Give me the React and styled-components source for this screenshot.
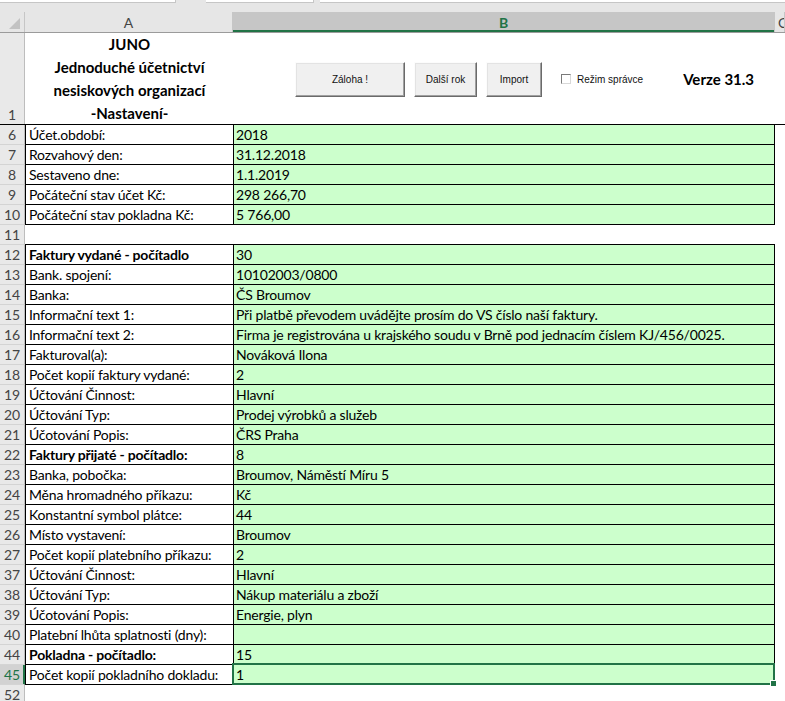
import styled, { createGlobalStyle } from "styled-components";

const GlobalStyle = createGlobalStyle`
  html, body {
    margin: 0;
    padding: 0;
    background: #fff;
  }
  body {
    width: 785px;
    height: 701px;
    overflow: hidden;
    font-family: Lato, "Liberation Sans", sans-serif;
    color: #000;
  }
`;

const COLS = "25px 209px 541px 1fr";
const GREEN = "#217346";
const MINT = "#ccffcc";

const rows = [
  { n: 6, label: "Účet.období:", value: "2018" },
  { n: 7, label: "Rozvahový den:", value: "31.12.2018" },
  { n: 8, label: "Sestaveno dne:", value: "1.1.2019" },
  { n: 9, label: "Počáteční stav účet Kč:", value: "298 266,70" },
  { n: 10, label: "Počáteční stav pokladna Kč:", value: "5 766,00" },
  { n: 11, empty: true },
  { n: 12, label: "Faktury vydané - počítadlo", value: "30", bold: true },
  { n: 13, label: "Bank. spojení:", value: "10102003/0800" },
  { n: 14, label: "Banka:", value: "ČS Broumov" },
  { n: 15, label: "Informační text 1:", value: "Při platbě převodem uvádějte prosím do VS číslo naší faktury." },
  { n: 16, label: "Informační text 2:", value: "Firma je registrována u krajského soudu v Brně pod jednacím číslem KJ/456/0025." },
  { n: 17, label: "Fakturoval(a):", value: "Nováková Ilona" },
  { n: 18, label: "Počet kopií faktury vydané:", value: "2" },
  { n: 19, label: "Účtování Činnost:", value: "Hlavní" },
  { n: 20, label: "Účtování Typ:", value: "Prodej výrobků a služeb" },
  { n: 21, label: "Účotování Popis:", value: "ČRS Praha" },
  { n: 22, label: "Faktury přijaté - počítadlo:", value: "8", bold: true },
  { n: 23, label: "Banka, pobočka:", value: "Broumov, Náměstí Míru 5" },
  { n: 24, label: "Měna hromadného příkazu:", value: "Kč" },
  { n: 25, label: "Konstantní symbol plátce:", value: "44" },
  { n: 26, label: "Místo vystavení:", value: "Broumov" },
  { n: 27, label: "Počet kopií platebního příkazu:", value: "2" },
  { n: 37, label: "Účtování Činnost:", value: "Hlavní" },
  { n: 38, label: "Účtování Typ:", value: "Nákup materiálu a zboží" },
  { n: 39, label: "Účotování Popis:", value: "Energie, plyn" },
  { n: 40, label: "Platební lhůta splatnosti (dny):", value: "" },
  { n: 44, label: "Pokladna - počítadlo:", value: "15", bold: true },
  { n: 45, label: "Počet kopií pokladního dokladu:", value: "1", selected: true },
];

function App() {
  return (
    <>
      <GlobalStyle />
      <Window>
        <TopStrip>
          <StripBox $w={175} />
          <StripGap $w={30} />
          <StripBox $w={107} />
          <StripGap $w={6} />
          <StripBox $w={467} />
        </TopStrip>

        <HeaderRow>
          <Corner>
            <CornerTriangle />
          </Corner>
          <ColHead>A</ColHead>
          <ColHead $active>B</ColHead>
          <ColHead $clip>C</ColHead>
        </HeaderRow>

        <TitleRow>
          <RowHead $bottom>1</RowHead>
          <TitleCell>
            <div>JUNO</div>
            <div>Jednoduché účetnictví</div>
            <div>nesiskových organizací</div>
            <div>-Nastavení-</div>
          </TitleCell>
          <ControlsCell>
            <Button $w={110}>Záloha !</Button>
            <Button $w={63}>Další rok</Button>
            <Button $w={56}>Import</Button>
            <CheckLabel>
              <CheckBox />
              Režim správce
            </CheckLabel>
            <Version>Verze 31.3</Version>
          </ControlsCell>
          <Blank />
        </TitleRow>

        <Table>
          {rows.map((r) => (
            <Row key={r.n}>
              <RowHead $active={r.selected}>{r.n}</RowHead>
              {r.empty ? (
                <>
                  <EmptyCell />
                  <EmptyCell />
                </>
              ) : (
                <>
                  <LabelCell $bold={r.bold}>{r.label}</LabelCell>
                  <ValueCell>
                    {r.value}
                    {r.selected && (
                      <Selection>
                        <FillHandle />
                      </Selection>
                    )}
                  </ValueCell>
                </>
              )}
              <Blank />
            </Row>
          ))}
          <Row>
            <RowHead>52</RowHead>
            <Blank />
            <Blank />
            <Blank />
          </Row>
        </Table>
      </Window>
    </>
  );
}

export default App;

const Window = styled.div`
  width: 785px;
  height: 701px;
  overflow: hidden;
  display: flex;
  flex-direction: column;
  background: #fff;
`;

const TopStrip = styled.div`
  height: 12px;
  flex: none;
  display: flex;
  align-items: flex-start;
  background: #e6e6e6;
`;

const StripBox = styled.div`
  width: ${(p) => p.$w}px;
  height: 2px;
  background: #fff;
  border-bottom: 1px solid #c6c6c6;
  border-right: 1px solid #c6c6c6;
  flex: none;
`;

const StripGap = styled.div`
  width: ${(p) => p.$w}px;
  flex: none;
`;

const HeaderRow = styled.div`
  display: grid;
  grid-template-columns: 25px 208px 542px 1fr;
  height: 21px;
  flex: none;
  background: #e6e6e6;
  border-bottom: 1px solid #9b9b9b;
  box-sizing: border-box;
`;

const Corner = styled.div`
  position: relative;
  border-right: 1px solid #c6c6c6;
`;

const CornerTriangle = styled.div`
  position: absolute;
  right: 4px;
  bottom: 3px;
  width: 0;
  height: 0;
  border-left: 11px solid transparent;
  border-bottom: 11px solid #c2c2c2;
`;

const ColHead = styled.div`
  display: flex;
  align-items: center;
  justify-content: ${(p) => (p.$clip ? "flex-start" : "center")};
  padding-left: ${(p) => (p.$clip ? "3px" : "0")};
  overflow: hidden;
  font-size: 14px;
  color: ${(p) => (p.$active ? GREEN : "#444")};
  font-weight: ${(p) => (p.$active ? 700 : 400)};
  background: ${(p) => (p.$active ? "#c6c6c6" : "transparent")};
  border-right: 1px solid #c6c6c6;
  box-shadow: ${(p) => (p.$active ? `inset 0 -2px 0 ${GREEN}` : "none")};
`;

const TitleRow = styled.div`
  display: grid;
  grid-template-columns: ${COLS};
  height: 91px;
  flex: none;
`;

const RowHead = styled.div`
  display: flex;
  align-items: ${(p) => (p.$bottom ? "flex-end" : "center")};
  justify-content: center;
  padding-bottom: ${(p) => (p.$bottom ? "1px" : "0")};
  box-sizing: border-box;
  font-size: 14px;
  color: ${(p) => (p.$active ? GREEN : "#444")};
  background: ${(p) => (p.$active ? "#d2d2d2" : "#e9e9e9")};
  border-bottom: 1px solid #d4d4d4;
  border-right: 1px solid ${(p) => (p.$active ? GREEN : "#bdbdbd")};
  ${(p) => p.$active && `box-shadow: inset -1px 0 0 ${GREEN};`}
`;

const TitleCell = styled.div`
  display: flex;
  flex-direction: column;
  justify-content: flex-end;
  align-items: center;
  font-weight: 700;
  font-size: 15px;
  line-height: 23px;
`;

const ControlsCell = styled.div`
  display: flex;
  align-items: center;
  padding-left: 61px;
  gap: 9px;
`;

const Button = styled.div`
  width: ${(p) => p.$w}px;
  height: 35px;
  box-sizing: border-box;
  display: flex;
  align-items: center;
  justify-content: center;
  font-family: "Liberation Sans", sans-serif;
  font-size: 10px;
  color: #111;
  background: #f0f0f0;
  border: 1px solid;
  border-color: #fcfcfc #6a6a6a #6a6a6a #fcfcfc;
  box-shadow: inset -1px -1px 0 #a0a0a0, inset 1px 1px 0 #e3e3e3;
`;

const CheckLabel = styled.div`
  display: flex;
  align-items: center;
  gap: 6px;
  margin-left: 10px;
  font-family: "Liberation Sans", sans-serif;
  font-size: 10px;
  color: #111;
`;

const CheckBox = styled.div`
  width: 10px;
  height: 10px;
  box-sizing: border-box;
  background: #fff;
  border: 1px solid;
  border-color: #7a7a7a #d8d8d8 #d8d8d8 #7a7a7a;
`;

const Version = styled.div`
  margin-left: 31px;
  font-weight: 700;
  font-size: 15px;
`;

const Blank = styled.div`
  background: #fff;
`;

const Table = styled.div`
  display: flex;
  flex-direction: column;
  border-top: 1px solid #000;
  flex: none;
`;

const Row = styled.div`
  display: grid;
  grid-template-columns: ${COLS};
  height: 20px;
  flex: none;
`;

const cellText = `
  display: flex;
  align-items: center;
  box-sizing: border-box;
  font-size: 14px;
  letter-spacing: -0.2px;
  white-space: nowrap;
  overflow: visible;
  border-bottom: 1px solid #000;
`;

const LabelCell = styled.div`
  ${cellText}
  padding-left: 3px;
  background: #fff;
  font-weight: ${(p) => (p.$bold ? 700 : 400)};
  border-left: 1px solid #000;
  border-right: 1px solid #000;
`;

const ValueCell = styled.div`
  ${cellText}
  position: relative;
  padding-left: 2px;
  background: ${MINT};
  border-right: 1px solid #000;
`;

const EmptyCell = styled.div`
  background: #fff;
  border-bottom: 1px solid #000;
`;

const Selection = styled.div`
  position: absolute;
  left: -2px;
  top: -2px;
  right: -1px;
  bottom: -1px;
  border: 2px solid ${GREEN};
  pointer-events: none;
`;

const FillHandle = styled.div`
  position: absolute;
  right: -4px;
  bottom: -4px;
  width: 5px;
  height: 5px;
  background: ${GREEN};
  border: 1px solid #fff;
`;
